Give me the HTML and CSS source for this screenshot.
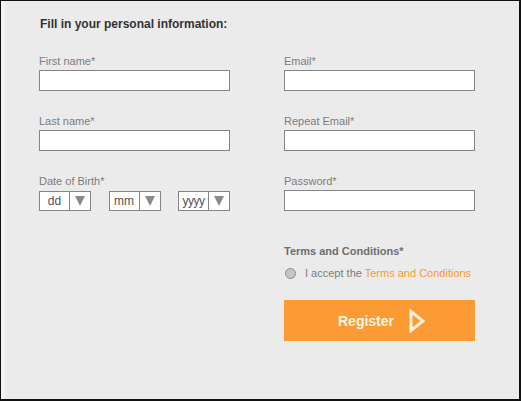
FILE: index.html
```html
<!DOCTYPE html>
<html>
<head>
<meta charset="utf-8">
<link rel="stylesheet" href="styles.css">
</head>
<body>
<div class="frame">
  <h1 class="title">Fill in your personal information:</h1>
  <div class="grid">
    <div class="col">
      <div class="field">
        <label class="label">First name*</label>
        <div class="input"></div>
      </div>
      <div class="field">
        <label class="label">Last name*</label>
        <div class="input"></div>
      </div>
      <div class="field">
        <label class="label">Date of Birth*</label>
        <div class="selects">
          <div class="select"><span class="sel-text">dd</span><span class="sel-arrow"><svg width="10" height="10" viewBox="0 0 10 10"><path d="M0 0H10L5 10Z" fill="#8a8a8a"/></svg></span></div>
          <div class="select"><span class="sel-text">mm</span><span class="sel-arrow"><svg width="10" height="10" viewBox="0 0 10 10"><path d="M0 0H10L5 10Z" fill="#8a8a8a"/></svg></span></div>
          <div class="select"><span class="sel-text sel-year">yyyy</span><span class="sel-arrow"><svg width="10" height="10" viewBox="0 0 10 10"><path d="M0 0H10L5 10Z" fill="#8a8a8a"/></svg></span></div>
        </div>
      </div>
    </div>
    <div class="col">
      <div class="field">
        <label class="label">Email*</label>
        <div class="input"></div>
      </div>
      <div class="field">
        <label class="label">Repeat Email*</label>
        <div class="input"></div>
      </div>
      <div class="field">
        <label class="label">Password*</label>
        <div class="input"></div>
      </div>
      <div class="terms-title">Terms and Conditions*</div>
      <div class="accept">
        <span class="radio"></span>
        <span>I accept the <span class="link">Terms and Conditions</span></span>
      </div>
      <div class="button">
        <span class="btn-text">Register</span>
        <svg class="btn-arrow" width="16" height="24" viewBox="0 0 16 24"><path d="M2 2.5L14 12L2 21.5Z" fill="none" stroke="#fff1dc" stroke-width="3" stroke-linejoin="miter"/></svg>
      </div>
    </div>
  </div>
</div>
</body>
</html>
```

FILE: styles.css
```css
html, body {
  margin: 0;
  padding: 0;
}
body {
  font-family: "Liberation Sans", Arial, sans-serif;
  background: #ebebeb;
}
.frame {
  box-sizing: border-box;
  width: 521px;
  height: 401px;
  background: #ebebeb;
  border-style: solid;
  border-color: #111;
  border-width: 1px 2px 2px 1px;
  box-shadow: inset 4px 0 0 #f3f3f3;
  padding: 16px 0 0 38px;
}
.title {
  margin: 0 0 0 1px;
  font-size: 12px;
  line-height: 15px;
  font-weight: bold;
  color: #333;
}
.grid {
  display: grid;
  grid-template-columns: 191px 191px;
  column-gap: 54px;
  margin-top: 23px;
}
.col {
  display: flex;
  flex-direction: column;
}
.field {
  display: flex;
  flex-direction: column;
  margin-bottom: 24px;
}
.label {
  font-size: 11px;
  line-height: 13px;
  color: #7c7c7c;
  margin-bottom: 2px;
}
.input {
  box-sizing: border-box;
  height: 21px;
  background: #fff;
  border: 1px solid #858585;
}
.selects {
  display: flex;
  justify-content: space-between;
  margin-top: 1px;
}
.select {
  box-sizing: border-box;
  width: 52px;
  height: 20px;
  display: flex;
  background: #fff;
  border: 1px solid #858585;
}
.sel-text {
  flex: 1;
  display: flex;
  align-items: center;
  justify-content: center;
  font-size: 12px;
  color: #555;
}
.sel-year {
  letter-spacing: -0.5px;
}
.sel-arrow {
  width: 20px;
  border-left: 1px solid #858585;
  display: flex;
  align-items: center;
  justify-content: center;
}
.terms-title {
  margin-top: 10px;
  font-size: 11px;
  line-height: 13px;
  font-weight: bold;
  color: #6e6e6e;
}
.accept {
  display: flex;
  align-items: center;
  margin-top: 9px;
  margin-left: 1px;
  font-size: 11px;
  line-height: 13px;
  color: #7c7c7c;
}
.radio {
  box-sizing: border-box;
  width: 11px;
  height: 11px;
  border-radius: 50%;
  background: #c6c6c6;
  border: 1px solid #8a8a8a;
  margin-right: 9px;
}
.link {
  color: #f59a2e;
}
.button {
  margin-top: 20px;
  height: 41px;
  background: #fc9b33;
  display: flex;
  align-items: center;
  justify-content: center;
  padding-left: 4px;
}
.btn-text {
  font-size: 14px;
  font-weight: bold;
  color: #fff6ea;
}
.btn-arrow {
  margin-left: 15px;
}
```
